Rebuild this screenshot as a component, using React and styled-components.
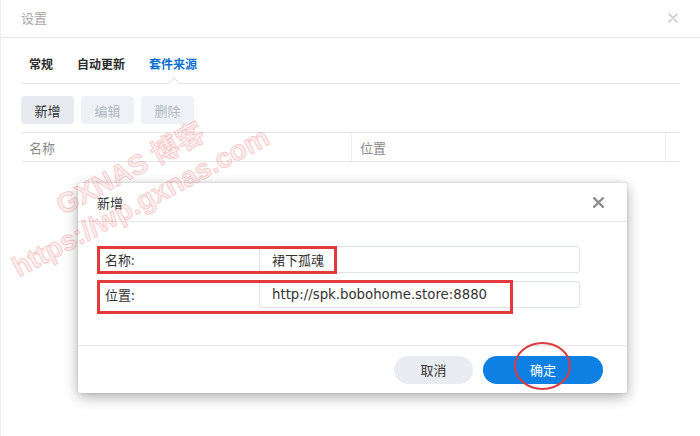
import React from "react";
import styled, { createGlobalStyle } from "styled-components";

const Global = createGlobalStyle`
  html, body { margin: 0; padding: 0; background: #fff; }
  body { font-family: "Noto Sans CJK SC", "Noto Sans", sans-serif; color: #333; }
  * { box-sizing: border-box; }
`;

const Window = styled.div`
  position: relative;
  width: 700px;
  height: 436px;
  overflow: hidden;
  background: #fff;
  border-left: 1px solid #ececec;
`;

const WinHeader = styled.div`
  height: 38px;
  display: flex;
  align-items: center;
  justify-content: space-between;
  padding: 0 22px 2px 20px;
  border-bottom: 1px solid #e6e6e6;
`;

const WinTitle = styled.div`
  font-size: 13px;
  color: #a8a8a8;
`;

const CloseIcon = ({ size = 10, color = "#bdbdbd", width = 1.5 }) => (
  <svg width={size} height={size} viewBox="0 0 10 10">
    <path d="M1 1 L9 9 M9 1 L1 9" stroke={color} strokeWidth={width} strokeLinecap="round" fill="none" />
  </svg>
);

const Content = styled.div`
  padding: 0 20px 0 20px;
`;

const Tabs = styled.div`
  height: 46px;
  display: flex;
  align-items: flex-end;
  gap: 24px;
  padding: 0 0 10px 8px;
  border-bottom: 1px solid #e3e3e3;
  position: relative;
`;

const Tab = styled.div`
  font-size: 12px;
  font-weight: 600;
  line-height: 18px;
  color: ${(p) => (p.$active ? "#0b6fd1" : "#2c2c2c")};
  position: relative;
  &::after {
    content: "";
    display: ${(p) => (p.$active ? "block" : "none")};
    position: absolute;
    left: 50%;
    bottom: -14px;
    width: 7px;
    height: 7px;
    margin-left: -3px;
    background: #fff;
    border-left: 1px solid #e3e3e3;
    border-top: 1px solid #e3e3e3;
    transform: rotate(45deg);
  }
`;

const Toolbar = styled.div`
  display: flex;
  gap: 7px;
  margin-top: 12px;
`;

const ToolButton = styled.div`
  width: 53px;
  height: 28px;
  border-radius: 4px;
  display: flex;
  align-items: center;
  justify-content: center;
  font-size: 13px;
  background: ${(p) => (p.$disabled ? "#eef1f5" : "#e7ebf1")};
  color: ${(p) => (p.$disabled ? "#b3b9c2" : "#333")};
`;

const TableHead = styled.div`
  margin-top: 8px;
  height: 30px;
  display: grid;
  grid-template-columns: 330px 314px 16px;
  border-top: 1px solid #e6e6e6;
  border-bottom: 1px solid #e6e6e6;
`;

const HeadCell = styled.div`
  display: flex;
  align-items: center;
  padding-left: 8px;
  font-size: 13px;
  color: #8a8a8a;
  border-left: ${(p) => (p.$divider ? "1px solid #ececec" : "none")};
`;

const Dialog = styled.div`
  position: absolute;
  left: 77px;
  top: 183px;
  width: 549px;
  height: 210px;
  background: #fff;
  border-radius: 3px;
  box-shadow: 0 4px 14px rgba(0, 0, 0, 0.32), 0 0 3px rgba(0, 0, 0, 0.12);
  display: flex;
  flex-direction: column;
`;

const DialogHeader = styled.div`
  height: 39px;
  display: flex;
  align-items: center;
  justify-content: space-between;
  padding: 0 23px 0 19px;
  border-bottom: 1px solid #e6e6e6;
  flex: none;
`;

const DialogTitle = styled.div`
  font-size: 13px;
  color: #333;
`;

const Form = styled.div`
  flex: 1;
  padding: 24px 47px 0 27px;
  display: flex;
  flex-direction: column;
  gap: 8px;
`;

const FieldRow = styled.div`
  display: grid;
  grid-template-columns: 154px 1fr;
  align-items: center;
`;

const Label = styled.div`
  font-size: 13px;
  color: #333;
`;

const Input = styled.div`
  height: 27px;
  border: 1px solid #dfe2e6;
  border-radius: 3px;
  display: flex;
  align-items: center;
  padding-left: 12px;
  color: #333;
  font-family: ${(p) => (p.$latin ? '"DejaVu Sans", "Noto Sans CJK SC", sans-serif' : '"Noto Sans CJK SC", sans-serif')};
  font-size: ${(p) => (p.$latin ? "13.3px" : "13px")};
`;

const Footer = styled.div`
  flex: none;
  height: 48px;
  border-top: 1px solid #e6e6e6;
  display: flex;
  justify-content: flex-end;
  align-items: center;
  gap: 10px;
  padding: 0 24px 0 0;
`;

const PillButton = styled.div`
  width: ${(p) => p.$w}px;
  height: 28px;
  border-radius: 14px;
  display: flex;
  align-items: center;
  justify-content: center;
  font-size: 13px;
  background: ${(p) => (p.$primary ? "#0e7fe3" : "#e9edf2")};
  color: ${(p) => (p.$primary ? "#fff" : "#333")};
`;

const RedBox = styled.div`
  position: absolute;
  border: 3px solid #e23a3a;
  pointer-events: none;
`;

const RedCircle = styled.div`
  position: absolute;
  left: 513px;
  top: 342px;
  width: 57px;
  height: 48px;
  border: 2px solid #dc3b40;
  border-radius: 50%;
  pointer-events: none;
`;

const Watermark = styled.div`
  position: absolute;
  left: ${(p) => p.$x}px;
  top: ${(p) => p.$y}px;
  transform-origin: 0 100%;
  transform: rotate(-28deg);
  white-space: nowrap;
  font-family: "Liberation Sans", "Noto Sans CJK SC", sans-serif;
  font-weight: 700;
  font-size: 28px;
  line-height: 28px;
  color: rgba(245, 175, 175, 0.22);
  -webkit-text-stroke: 1px rgba(230, 110, 110, 0.32);
  pointer-events: none;
`;

export default function App() {
  return (
    <>
      <Global />
      <Window>
        <WinHeader>
          <WinTitle>设置</WinTitle>
          <CloseIcon size={10} color="#c4c4c4" width={1.4} />
        </WinHeader>
        <Content>
          <Tabs>
            <Tab>常规</Tab>
            <Tab>自动更新</Tab>
            <Tab $active>套件来源</Tab>
          </Tabs>
          <Toolbar>
            <ToolButton>新增</ToolButton>
            <ToolButton $disabled>编辑</ToolButton>
            <ToolButton $disabled>删除</ToolButton>
          </Toolbar>
          <TableHead>
            <HeadCell>名称</HeadCell>
            <HeadCell $divider>位置</HeadCell>
            <HeadCell $divider />
          </TableHead>
        </Content>

        <Dialog>
          <DialogHeader>
            <DialogTitle>新增</DialogTitle>
            <CloseIcon size={11} color="#8e8e8e" width={2} />
          </DialogHeader>
          <Form>
            <FieldRow>
              <Label>名称:</Label>
              <Input>裙下孤魂</Input>
            </FieldRow>
            <FieldRow>
              <Label>位置:</Label>
              <Input $latin>http://spk.bobohome.store:8880</Input>
            </FieldRow>
          </Form>
          <Footer>
            <PillButton $w={79}>取消</PillButton>
            <PillButton $w={120} $primary>确定</PillButton>
          </Footer>
        </Dialog>

        <RedBox style={{ left: 96, top: 246, width: 240, height: 28 }} />
        <RedBox style={{ left: 96, top: 280, width: 416, height: 34 }} />
        <RedCircle />

        <Watermark $x={64} $y={192}>GXNAS 博客</Watermark>
        <Watermark $x={20} $y={254}>https://wp.gxnas.com</Watermark>
      </Window>
    </>
  );
}
